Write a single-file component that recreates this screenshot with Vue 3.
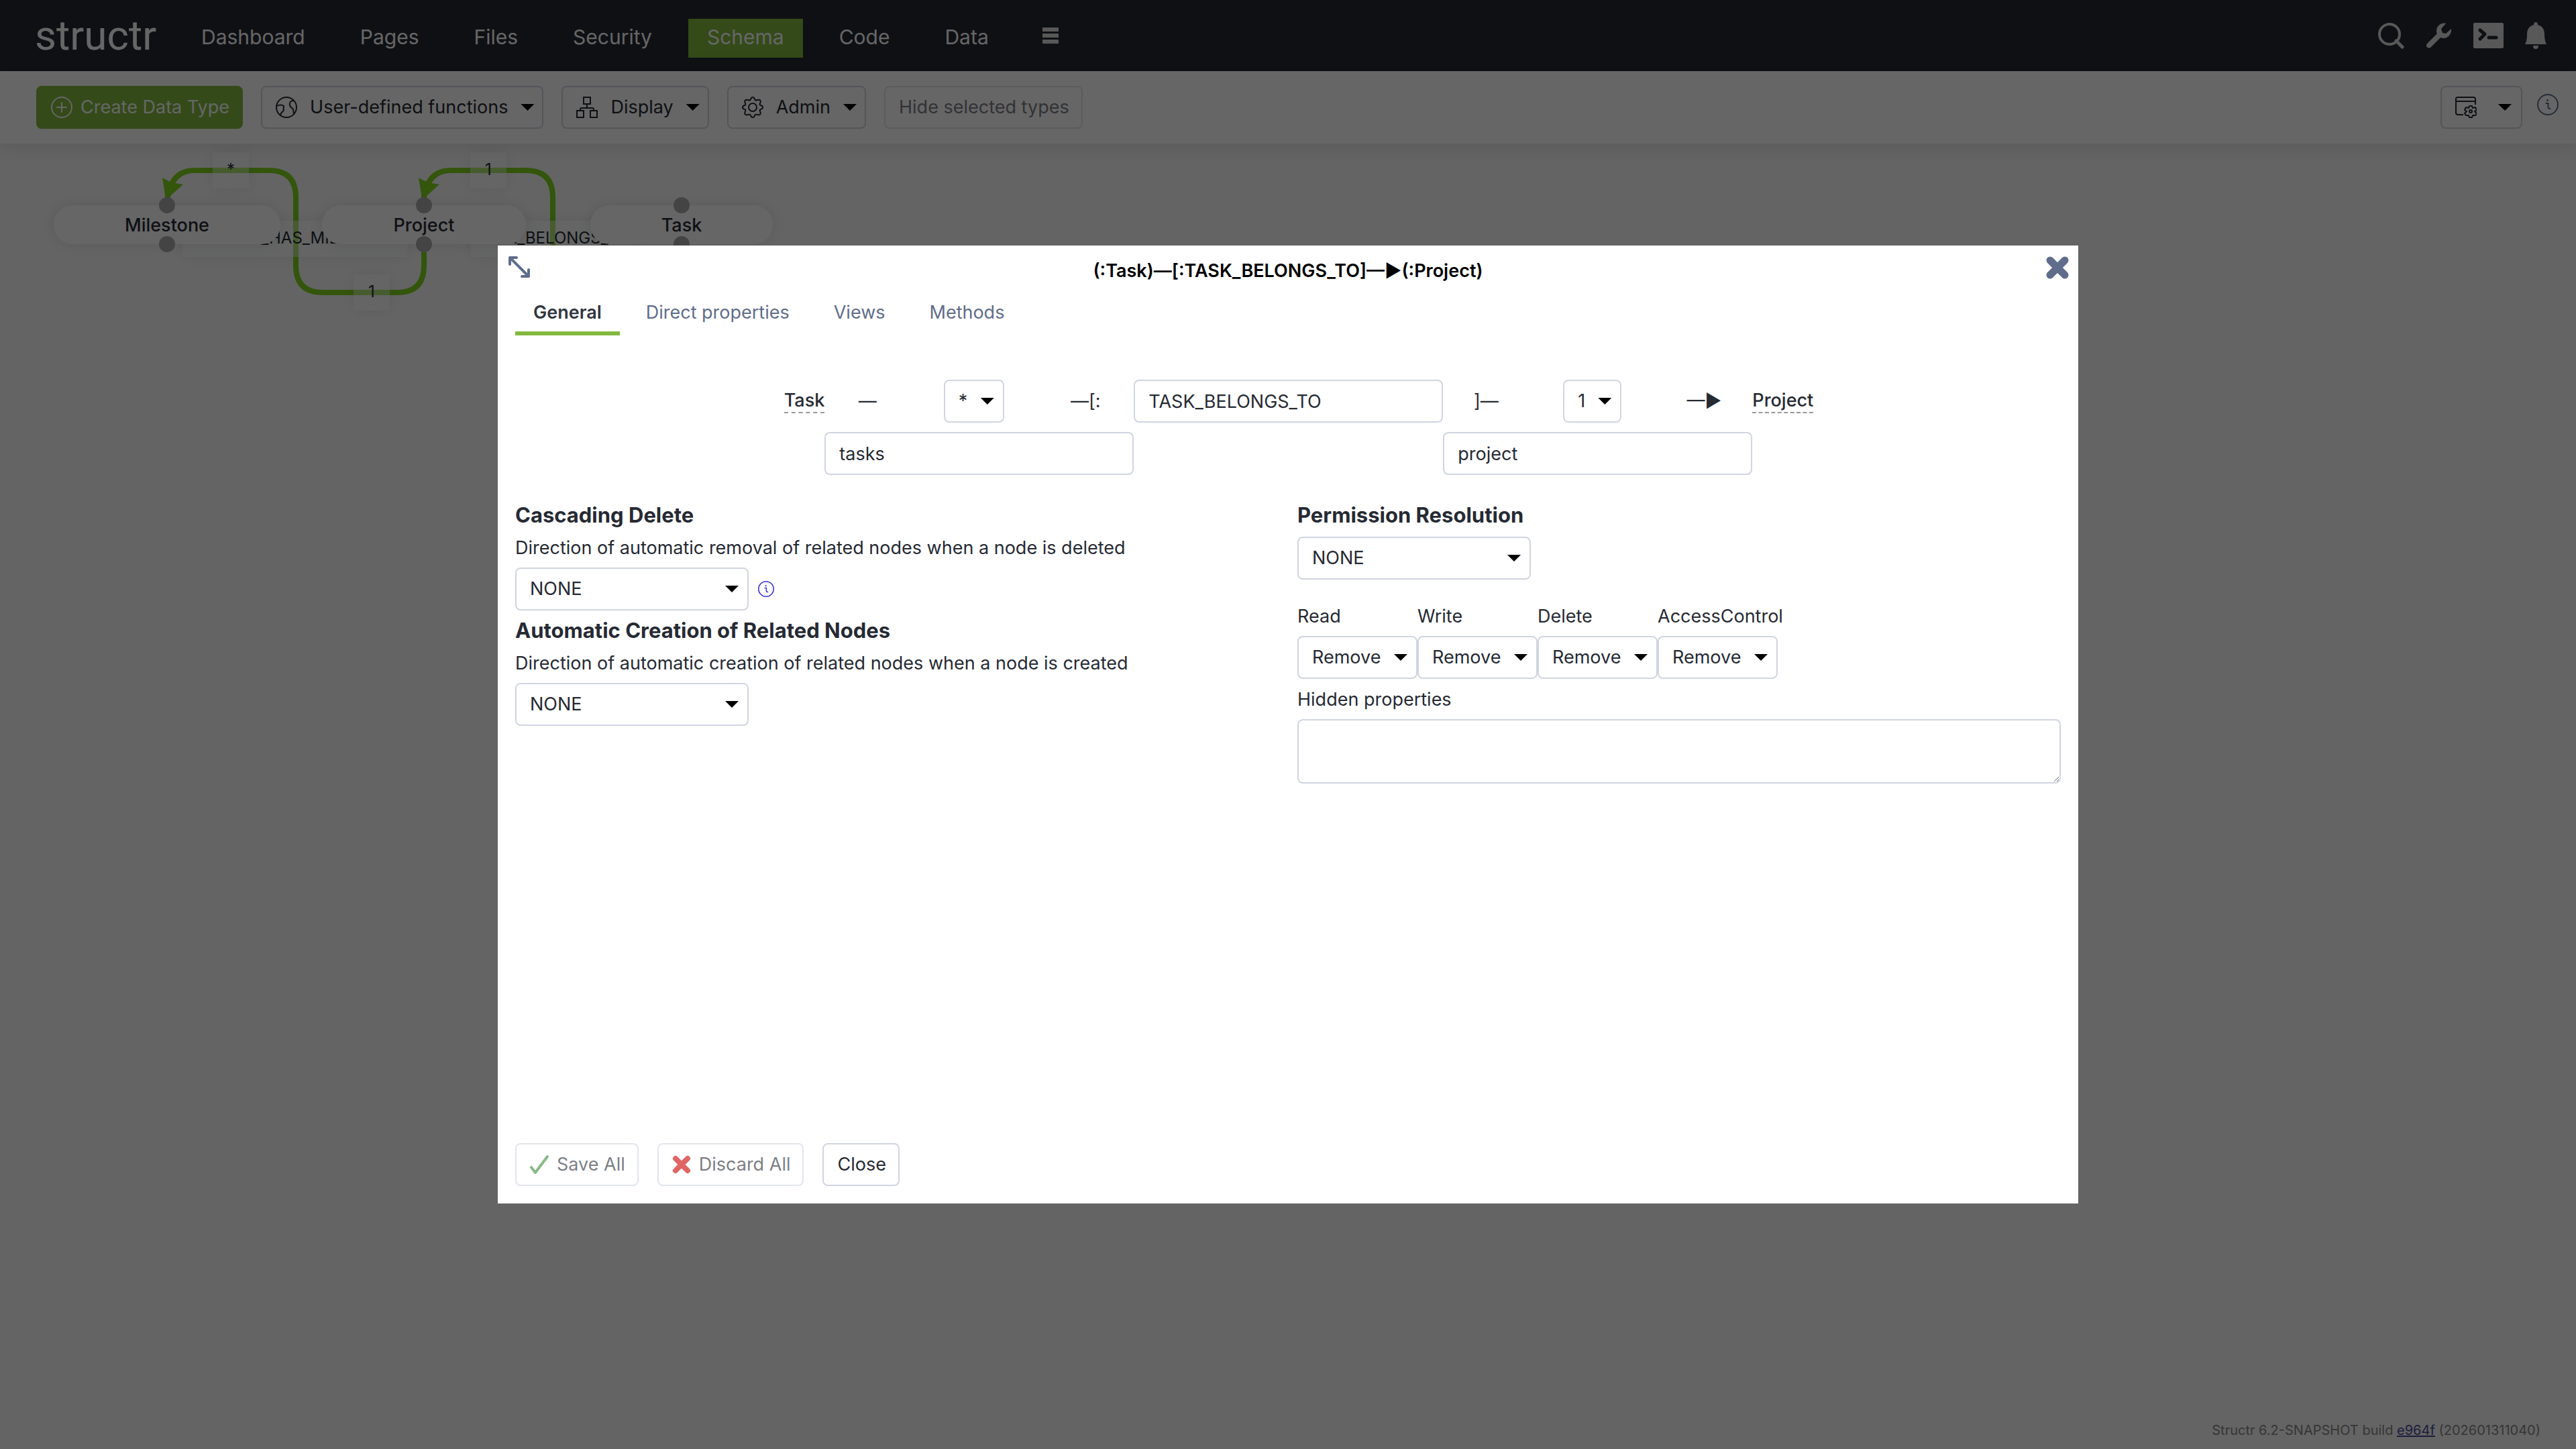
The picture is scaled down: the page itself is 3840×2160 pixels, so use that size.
<script setup>
import { ref } from 'vue'

const navItems = ['Dashboard', 'Pages', 'Files', 'Security', 'Schema', 'Code', 'Data']
const activeNav = 'Schema'

const nodes = [
  { name: 'Milestone', x: 80, y: 92, width: 338 },
  { name: 'Project', x: 480, y: 92, width: 304 },
  { name: 'Task', x: 880, y: 92, width: 272 }
]

// x and y are the centre of each label
const labels = [
  { text: '*', x: 344, y: 40 },
  { text: 'PROJECT_HAS_MILESTONE', x: 440, y: 142 },
  { text: '1', x: 554, y: 222 },
  { text: '1', x: 728, y: 40 },
  { text: 'TASK_BELONGS_TO', x: 824, y: 142 }
]

const tabs = ['General', 'Direct properties', 'Views', 'Methods']
const activeTab = ref('General')

const relation = ref({
  sourceMultiplicity: '*',
  targetMultiplicity: '1',
  type: 'TASK_BELONGS_TO',
  sourceName: 'tasks',
  targetName: 'project',
  cascadingDelete: 'NONE',
  autocreate: 'NONE',
  permission: 'NONE',
  hidden: ''
})

const permissions = ref([
  { name: 'Read', value: 'Remove' },
  { name: 'Write', value: 'Remove' },
  { name: 'Delete', value: 'Remove' },
  { name: 'AccessControl', value: 'Remove' }
])
</script>

<template>
  <div class="page">
    <header class="header">
      <a href="#" class="logo">structr</a>
      <nav class="nav">
        <a v-for="item in navItems" :key="item" href="#" :class="{ active: item === activeNav }">{{ item }}</a>
      </nav>
      <button class="icon-btn burger" aria-label="More">
        <svg width="24" height="24" viewBox="0 0 24 24"><path d="M0 0h24v6H0zM0 9h24v6H0zM0 18h24v6H0z" fill="currentColor" /></svg>
      </button>
      <div class="header-icons">
        <button class="icon-btn" aria-label="Search">
          <svg width="40" height="40" viewBox="0 0 40 40" fill="none" stroke="currentColor"><circle cx="17" cy="18" r="15" stroke-width="4" /><path d="M27 28l9 9" stroke-width="5" stroke-linecap="round" /></svg>
        </button>
        <button class="icon-btn" aria-label="Config">
          <svg width="38" height="38" viewBox="0 0 38 38" fill="currentColor"><path d="M29 1c-7-2-14 4-14 11 0 2 0 3 1 4L1 31c-3 4 1 8 5 6l15-15c9 4 17-4 16-13l-8 7-5-1-2-6z" /></svg>
        </button>
        <button class="icon-btn" aria-label="Console">
          <svg width="45" height="38" viewBox="0 0 45 38"><rect width="45" height="38" rx="2" fill="currentColor" /><path d="M10 11l7 6-7 7M23 22h11" fill="none" stroke="#262a33" stroke-width="5" stroke-linecap="round" stroke-linejoin="round" /></svg>
        </button>
        <button class="icon-btn" aria-label="Notifications">
          <svg width="32" height="40" viewBox="0 0 32 40" fill="currentColor"><path d="M13 4q0-4 3-4t3 4c7 2 10 7 10 14 0 7 1 11 3 15H0c2-4 3-8 3-15C3 11 6 6 13 4zM12 35h8q0 5-4 5t-4-5z" /></svg>
        </button>
      </div>
    </header>

    <div class="toolbar">
      <button class="btn create">
        <svg width="32" height="32" viewBox="0 0 32 32" fill="none" stroke="currentColor" stroke-width="2"><circle cx="16" cy="16" r="15" /><path d="M16 9v14M9 16h14" stroke-linecap="round" /></svg>
        Create Data Type
      </button>
      <button class="btn menu">
        <svg width="32" height="32" viewBox="0 0 32 32" fill="none" stroke="currentColor" stroke-width="2" stroke-linejoin="round"><circle cx="16" cy="16" r="15" /><path d="M1 14c4-2 9-2 11 0 0 3-1 4 0 6-1 3-5 3-5 9M27 6c-5 0-7 3-6 7 1 4 4 3 5 6l1 7" /></svg>
        <span>User-defined functions</span>
        <i class="caret"></i>
      </button>
      <button class="btn menu">
        <svg width="32" height="32" viewBox="0 0 32 32" fill="none" stroke="currentColor" stroke-width="2"><rect x="11" y="1" width="10" height="10" /><rect x="1" y="21" width="10" height="10" /><rect x="21" y="21" width="10" height="10" /><path d="M16 11v6M6 21v-2q0-2 2-2h16q2 0 2 2v2" /></svg>
        <span>Display</span>
        <i class="caret"></i>
      </button>
      <button class="btn menu">
        <svg width="32" height="32" viewBox="0 0 32 32" fill="none" stroke="currentColor" stroke-width="2" stroke-linejoin="round"><circle cx="16" cy="16" r="6" /><path d="M13 4c1-4 5-4 6 0 1 2 2 2 4 1 4-1 6 1 4 5-1 2 0 3 1 3 4 1 4 5 0 6-1 0-2 1-1 3 2 4 0 6-4 5-2-1-3-1-4 1-1 4-5 4-6 0-1-2-2-2-4-1-4 1-6-1-4-5 1-2 0-3-1-3-4-1-4-5 0-6 1 0 2-1 1-3-2-4 0-6 4-5 2 1 3 1 4-1z" /></svg>
        <span>Admin</span>
        <i class="caret"></i>
      </button>
      <button class="btn" disabled>Hide selected types</button>
      <button class="btn menu settings" aria-label="Display settings">
        <svg width="32" height="32" viewBox="0 0 32 32" fill="none" stroke="currentColor" stroke-width="2" stroke-linejoin="round"><path d="M12 27H4q-3 0-3-3V3q0-2 3-2h23q3 0 3 3v8M1 7h29" /><circle cx="23" cy="22" r="2" /><path d="M21 14h4l1 3 4-1 2 4-3 2 3 3-2 3-4 0-1 3h-4l-1-3-4 0-2-3 3-3-3-2 2-4 4 1z" /></svg>
        <i class="caret"></i>
      </button>
      <a href="#" class="info" aria-label="Help">
        <svg width="32" height="32" viewBox="0 0 32 32" fill="none" stroke="currentColor" stroke-width="2"><circle cx="16" cy="16" r="15" /><path d="M13.500 14h3v6q0 2 3 2" stroke-linecap="round" /><circle cx="15.500" cy="9.500" r="1.500" fill="currentColor" stroke="none" /></svg>
      </a>
    </div>

    <main class="canvas">
      <svg class="connections" fill="none" stroke="#81d420" stroke-width="8">
        <path d="M632 162v20q0 40-40 40H481q-40 0-40-40V80q0-40-40-40H290q-34 0-40 40" />
        <path d="M1016 162v20q0 40-40 40H864q-40 0-40-40V80q0-40-40-40H672q-34 0-40 40" />
        <path d="M242 51l14 7 17 3-19 17v6h-8v-8zM624 51l14 7 17 3-19 17v6h-8v-8z" fill="#81d420" stroke="none" />
      </svg>
      <span v-for="(label, i) in labels" :key="i" class="label" :style="{ left: label.x + 'px', top: label.y + 'px' }">{{ label.text }}</span>
      <div v-for="node in nodes" :key="node.name" class="node" :style="{ left: node.x + 'px', top: node.y + 'px', width: node.width + 'px' }">{{ node.name }}</div>
    </main>

    <footer class="build">Structr 6.2-SNAPSHOT build <a href="#">e964f</a> (202601311040)</footer>

    <div class="overlay">
      <section class="dialog" role="dialog" aria-labelledby="dialog-title">
        <div class="dialog-head">
          <button class="icon-btn" aria-label="Maximize">
            <svg width="32" height="32" viewBox="0 0 32 32" fill="none" stroke="currentColor" stroke-width="4" stroke-linecap="round" stroke-linejoin="round"><path d="M3 3l26 26M2 12V2h10M20 30h10V20" /></svg>
          </button>
          <h2 id="dialog-title">(:Task)—[:TASK_BELONGS_TO]—►(:Project)</h2>
          <button class="icon-btn" aria-label="Close dialog">
            <svg width="34" height="34" viewBox="0 0 34 34" stroke="currentColor" stroke-width="11" stroke-linecap="round"><path d="M6 6l22 22M28 6L6 28" /></svg>
          </button>
        </div>

        <div class="tabs" role="tablist">
          <button v-for="tab in tabs" :key="tab" role="tab" :class="{ active: tab === activeTab }" @click="activeTab = tab">{{ tab }}</button>
        </div>

        <div class="relation">
          <a href="#">Task</a>
          <div class="cardinality">
            <span>—</span>
            <div class="select">
              <select v-model="relation.sourceMultiplicity" aria-label="Source multiplicity"><option>*</option></select>
            </div>
            <span>—[:</span>
          </div>
          <input v-model="relation.type" type="text" aria-label="Relationship type">
          <div class="cardinality">
            <span>]—</span>
            <div class="select">
              <select v-model="relation.targetMultiplicity" aria-label="Target multiplicity"><option>1</option></select>
            </div>
            <span>—►</span>
          </div>
          <a href="#">Project</a>
          <input v-model="relation.sourceName" class="source" type="text" aria-label="Source property">
          <input v-model="relation.targetName" class="target" type="text" aria-label="Target property">
        </div>

        <div class="columns">
          <div>
            <h3>Cascading Delete</h3>
            <label class="text" for="cascading">Direction of automatic removal of related nodes when a node is deleted</label>
            <div class="with-info">
              <div class="select wide">
                <select id="cascading" v-model="relation.cascadingDelete"><option>NONE</option></select>
              </div>
              <svg class="hint" width="24" height="24" viewBox="0 0 32 32" fill="none" stroke="currentColor" stroke-width="2"><circle cx="16" cy="16" r="15" /><path d="M13.500 14h3v6q0 2 3 2" stroke-linecap="round" /><circle cx="15.500" cy="9.500" r="1.500" fill="currentColor" stroke="none" /></svg>
            </div>
            <h3 class="next">Automatic Creation of Related Nodes</h3>
            <label class="text" for="autocreate">Direction of automatic creation of related nodes when a node is created</label>
            <div class="select wide">
              <select id="autocreate" v-model="relation.autocreate"><option>NONE</option></select>
            </div>
          </div>

          <div>
            <h3>Permission Resolution</h3>
            <div class="select wide">
              <select v-model="relation.permission" aria-label="Permission Resolution"><option>NONE</option></select>
            </div>
            <div class="permissions">
              <div v-for="perm in permissions" :key="perm.name">
                <label class="text" :for="perm.name">{{ perm.name }}</label>
                <div class="select">
                  <select :id="perm.name" v-model="perm.value"><option>Remove</option></select>
                </div>
              </div>
            </div>
            <label class="text" for="hidden-props">Hidden properties</label>
            <textarea id="hidden-props" v-model="relation.hidden"></textarea>
          </div>
        </div>

        <div class="actions">
          <button class="btn" disabled>
            <svg width="28" height="32" viewBox="0 0 28 32" fill="none" stroke="#3d8b3d" stroke-width="4" stroke-linecap="round" stroke-linejoin="round"><path d="M2 20l6 8L26 4" /></svg>
            Save All
          </button>
          <button class="btn" disabled>
            <svg width="28" height="32" viewBox="0 0 28 32" stroke="#cc0000" stroke-width="8" stroke-linecap="round"><path d="M5 7l18 18M23 7L5 25" /></svg>
            Discard All
          </button>
          <button class="btn">Close</button>
        </div>
      </section>
    </div>
  </div>
</template>

<style>
body {
  margin: 0;
  background: #fafafa;
}
</style>

<style scoped>
.page {
  display: flex;
  flex-direction: column;
  min-height: 100vh;
  font-family: Inter, sans-serif;
  font-size: 27px;
  line-height: 34px;
  color: #262a33;
}
.page * { box-sizing: border-box; }
button, input, select, textarea { font: inherit; color: inherit; }

.header {
  display: flex;
  align-items: center;
  height: 106px;
  padding: 0 44px 0 52px;
  background: #262a33;
  color: #fff;
}
.logo {
  width: 196px;
  font-family: Roboto, sans-serif;
  font-size: 62px;
  line-height: 64px;
  color: #fff;
  text-decoration: none;
}
.nav { display: flex; gap: 26px; margin: 8px 0 0 24px; }
.nav a {
  height: 58px;
  padding: 0 28px;
  font-size: 30px;
  line-height: 54px;
  color: #fff;
  text-decoration: none;
}
.nav a.active { background: #83b93f; }
.icon-btn {
  display: block;
  padding: 0;
  border: none;
  background: none;
  cursor: pointer;
}
.icon-btn svg, .btn svg, .info svg { display: block; }
.header .icon-btn { color: #dcdcdc; }
.burger { margin-left: 52px; }
.header-icons { display: flex; align-items: center; gap: 32px; margin-left: auto; }

.toolbar {
  position: relative;
  z-index: 1;
  display: flex;
  align-items: center;
  gap: 27px;
  height: 108px;
  padding: 0 26px 0 54px;
  background: #fff;
  box-shadow: 0 0 30px rgba(0, 0, 0, 0.15);
}
.btn {
  display: flex;
  align-items: center;
  gap: 12px;
  height: 64px;
  padding: 0 18px 0 20px;
  border: 2px solid #d1d5e1;
  border-radius: 8px;
  background: #fff;
  cursor: pointer;
}
.btn:disabled { opacity: 0.6; cursor: not-allowed; }
.btn.create { border-color: #83b93f; background: #83b93f; color: #fff; }
.btn.menu { gap: 19px; padding-right: 12px; }
.caret {
  width: 20px;
  height: 10px;
  background: #000;
  clip-path: polygon(0 0, 100% 0, 50% 100%);
}
.btn.settings { gap: 32px; margin-left: auto; padding-right: 14px; }
.info { align-self: flex-start; margin-top: 34px; margin-left: -5px; color: #5f6d8b; }

.canvas { position: relative; flex: 1; }
.connections { position: absolute; width: 100%; height: 100%; }
.label {
  position: absolute;
  min-width: 54px;
  padding: 10px 8px 12px;
  font-size: 24px;
  line-height: 32px;
  text-align: center;
  background: rgba(248, 255, 250, 0.4);
  box-shadow: 0 0 20px rgba(0, 0, 0, 0.08);
  transform: translate(-50%, -50%);
}
.node {
  position: absolute;
  height: 58px;
  border-radius: 28px;
  background: #fff;
  box-shadow: 0 0 20px rgba(0, 0, 0, 0.1);
  font-weight: 500;
  line-height: 60px;
  text-align: center;
}
.node::before, .node::after {
  content: '';
  position: absolute;
  left: calc(50% - 12px);
  width: 24px;
  height: 24px;
  border-radius: 50%;
  background: #aaa;
}
.node::before { top: -12px; }
.node::after { bottom: -12px; }

.build {
  padding: 0 53px 16px 0;
  font-size: 20px;
  line-height: 24px;
  text-align: right;
  color: #888;
}
.build a { color: #4a4a9a; }

.overlay {
  position: fixed;
  inset: 0;
  z-index: 2;
  display: flex;
  padding: 366px 742px;
  background: rgba(0, 0, 0, 0.6);
}
.dialog {
  display: flex;
  flex: 1;
  flex-direction: column;
  padding: 0 26px 26px;
  background: #fff;
}
.dialog-head {
  display: flex;
  justify-content: space-between;
  align-items: flex-start;
  margin: 0 -12px 0 -10px;
  padding-top: 16px;
  color: #5f6d8b;
}
h2, h3 { margin: 0; }
h2 { font-size: 27px; line-height: 44px; font-weight: 600; color: #000; }
h3 { margin-bottom: 14px; font-size: 31px; line-height: 36px; font-weight: 700; }
.tabs { display: flex; gap: 12px; margin-top: 10px; }
.tabs button {
  height: 64px;
  padding: 2px 27px 0;
  border: none;
  border-bottom: 6px solid transparent;
  background: none;
  color: #5f6d8b;
  cursor: pointer;
}
.tabs button.active { border-color: #83b93f; color: #30363f; font-weight: 600; }

.relation {
  display: grid;
  grid-template-columns: auto 461px 461px 461px auto;
  row-gap: 14px;
  align-items: center;
  justify-content: center;
  margin-top: 66px;
  padding-left: 32px;
}
.relation a {
  border-bottom: 2px dashed #999;
  font-weight: 500;
  color: inherit;
  text-decoration: none;
}
.cardinality {
  display: grid;
  grid-template-columns: 128px 1fr 144px;
  align-items: center;
  justify-items: center;
}
.source { grid-column: 2; }
.target { grid-column: 4; }

input, select, textarea {
  width: 100%;
  height: 64px;
  margin: 0;
  padding: 0 20px;
  border: 2px solid #d1d5e1;
  border-radius: 8px;
  background: #fff;
  outline: none;
}
textarea { display: block; height: 96px; }
/* the arrow shares the grid cell of the select */
.select { display: inline-grid; align-items: center; vertical-align: top; }
.select select {
  grid-area: 1 / 1;
  padding: 0 52px 0 20px;
  appearance: none;
}
.select::after {
  content: '';
  grid-area: 1 / 1;
  justify-self: end;
  width: 20px;
  height: 10px;
  margin-right: 15px;
  background: #000;
  clip-path: polygon(0 0, 100% 0, 50% 100%);
  pointer-events: none;
}
.select.wide { width: 348px; }

.columns {
  display: grid;
  grid-template-columns: 1fr 1fr;
  gap: 28px;
  margin-top: 42px;
}
.text { display: block; margin-bottom: 12px; }
.with-info { display: flex; align-items: center; gap: 14px; }
.hint { color: #3a35d8; }
.next { margin-top: 12px; }
.permissions {
  display: grid;
  grid-template-columns: repeat(4, 179px);
  margin: 38px 0 14px;
}
.permissions .select { width: 100%; }
.actions { display: flex; gap: 28px; margin-top: auto; }
</style>
